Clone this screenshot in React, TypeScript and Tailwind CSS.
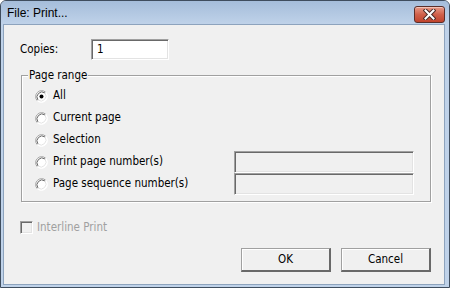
import React from "react";

const titleFont = { fontFamily: '"Liberation Sans", Arial, sans-serif' };
const bodyFont = { fontFamily: '"DejaVu Sans Condensed", "DejaVu Sans", Tahoma, sans-serif' };

function Radio({ checked }: { checked?: boolean }) {
  return (
    <svg width="13" height="13" viewBox="0 0 13 13" className="shrink-0">
      <circle cx="6.5" cy="6.5" r="6" fill="#fff" />
      <path d="M2.26 10.74 A6 6 0 0 1 10.74 2.26" fill="none" stroke="#a0a0a0" strokeWidth="1" />
      <path d="M10.74 2.26 A6 6 0 0 1 2.26 10.74" fill="none" stroke="#ffffff" strokeWidth="1" />
      <path d="M3 10 A5 5 0 0 1 10 3" fill="none" stroke="#696969" strokeWidth="1" />
      <path d="M10 3 A5 5 0 0 1 3 10" fill="none" stroke="#e3e3e3" strokeWidth="1" />
      {checked && <circle cx="6.5" cy="6.5" r="2" fill="#000" />}
    </svg>
  );
}

function Sunken({ className, children }: { className: string; children?: React.ReactNode }) {
  return (
    <div
      className={
        "border border-t-[#a0a0a0] border-l-[#a0a0a0] border-b-white border-r-white shadow-[inset_1px_1px_0_#696969,inset_-1px_-1px_0_#e3e3e3] " +
        className
      }
    >
      {children}
    </div>
  );
}

function Button({ label }: { label: string }) {
  return (
    <button className="w-[90px] h-[24px] bg-[#f0f0f0] border-t border-l border-t-[#a0a0a0] border-l-[#a0a0a0] border-b-2 border-r-2 border-b-[#696969] border-r-[#696969] shadow-[inset_1px_1px_0_#fff] text-[11.5px] text-black flex items-center justify-center pt-[1px]">
      {label}
    </button>
  );
}

const rows = [
  { label: "All", checked: true },
  { label: "Current page" },
  { label: "Selection" },
  { label: "Print page number(s)", field: true },
  { label: "Page sequence number(s)", field: true },
];

export default function App() {
  return (
    <div style={titleFont} className="w-[450px] h-[288px] flex flex-col border border-[#3f4d5e] rounded-t-[6px] bg-[#bfd2e9] text-[12px] text-black overflow-hidden">
      {/* title bar */}
      <div className="h-[23px] flex items-center bg-gradient-to-b from-[#a5bdda] to-[#bfd2e9] pl-[6px] pr-[4px]">
        <span className="flex-1 leading-[14px] pt-[1px]">File: Print...</span>
        <div className="w-[31px] h-[17px] mt-[3px] rounded-[3px] border border-[#5b2e29] bg-gradient-to-b from-[#e79a88] via-[#d0604a] to-[#c0432c] flex items-center justify-center shadow-[inset_0_1px_0_#f3c2b5]">
          <svg width="13" height="11" viewBox="0 0 13 11">
            <path d="M2.5 1.5 L10.5 9.5 M10.5 1.5 L2.5 9.5" stroke="#4a2a26" strokeWidth="4" strokeLinecap="square" />
            <path d="M2.5 1.5 L10.5 9.5 M10.5 1.5 L2.5 9.5" stroke="#ffffff" strokeWidth="2" strokeLinecap="square" />
          </svg>
        </div>
      </div>

      {/* client */}
      <div style={bodyFont} className="flex-1 flex pl-[2px] pr-[4px] pb-[2px] text-[11.5px]">
        <div className="flex-1 flex flex-col border border-[#8da3bd] bg-[#f0f0f0]">
          <div className="flex items-center pl-[16px] pt-[14px]">
            <span className="w-[71px]">Copies:</span>
            <Sunken className="w-[78px] h-[21px] bg-white flex items-center pl-[5px]">
              <span>1</span>
            </Sunken>
          </div>

          <div className="relative mt-[15px] ml-[17px] mr-[13px] border border-[#a0a0a0] shadow-[inset_1px_1px_0_#fff,1px_1px_0_#fff] pt-[9px] pb-[6px] pl-[13px] pr-[16px]">
            <span className="absolute left-[6px] -top-[8px] px-[1px] bg-[#f0f0f0] leading-[14px]">Page range</span>
            {rows.map((r) => (
              <div key={r.label} className="h-[22px] flex items-center">
                <Radio checked={r.checked} />
                <span className="ml-[5px] flex-1">{r.label}</span>
                {r.field && <Sunken className="w-[180px] h-[22px] bg-[#f0f0f0]" />}
              </div>
            ))}
          </div>

          <div className="flex items-center pl-[16px] mt-[19px] h-[13px]">
            <Sunken className="w-[13px] h-[13px] bg-[#f0f0f0]" />
            <span className="ml-[4px] text-[#a0a0a0]">Interline Print</span>
          </div>

          <div className="flex justify-end gap-[10px] mr-[13px] mt-[14px]">
            <Button label="OK" />
            <Button label="Cancel" />
          </div>
        </div>
      </div>
    </div>
  );
}
